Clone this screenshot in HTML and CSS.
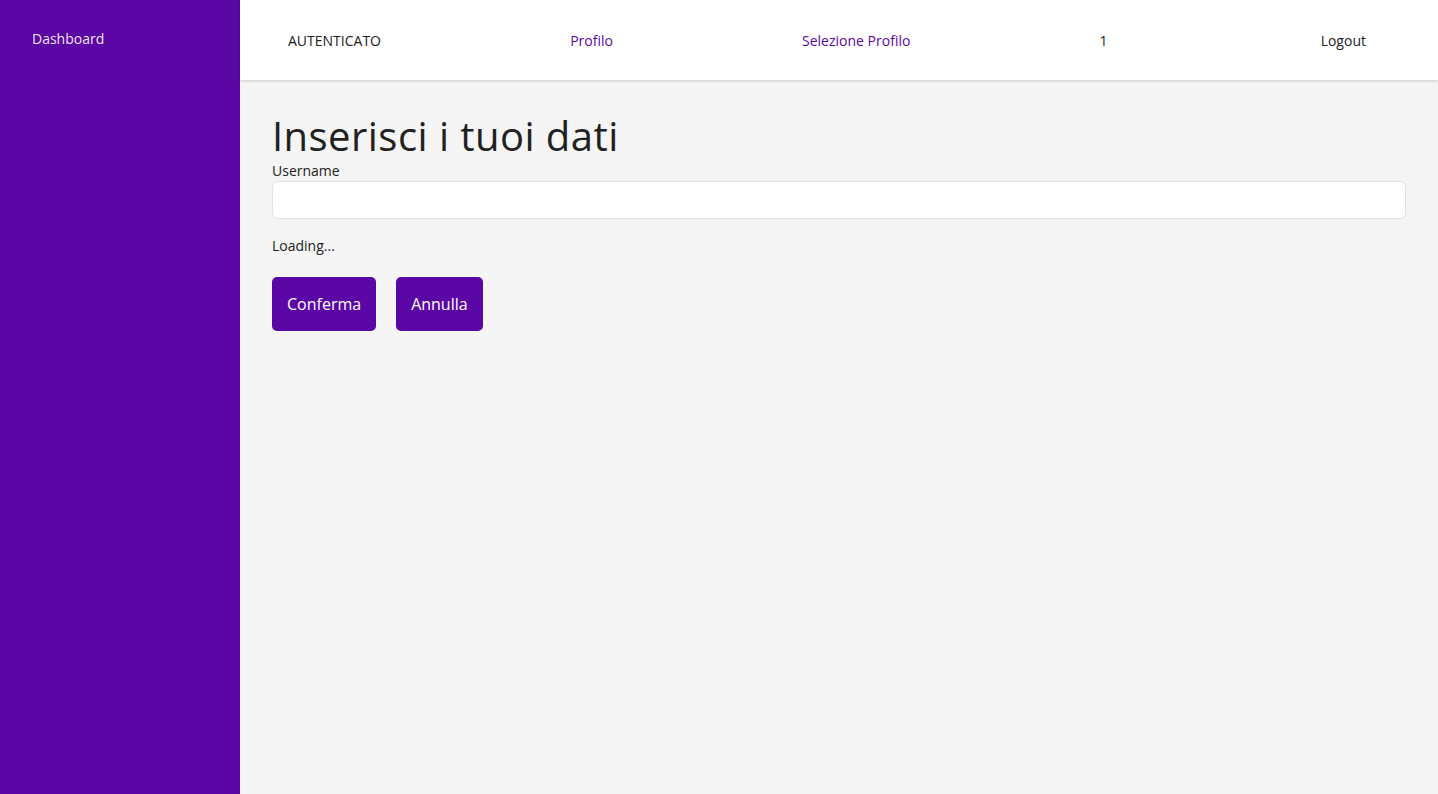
FILE: index.html
```html
<!DOCTYPE html>
<html lang="it">
<head>
<meta charset="utf-8">
<title>Inserisci i tuoi dati</title>
<link rel="stylesheet" href="styles.css">
</head>
<body>
<div class="layout">
  <aside class="sidebar">
    <a class="side-link" href="#">Dashboard</a>
  </aside>
  <div class="main">
    <header class="topbar">
      <span class="nav-item">AUTENTICATO</span>
      <a class="nav-item nav-link" href="#">Profilo</a>
      <a class="nav-item nav-link" href="#">Selezione Profilo</a>
      <span class="nav-item">1</span>
      <button class="nav-item logout">Logout</button>
    </header>
    <section class="content">
      <h1 class="title">Inserisci i tuoi dati</h1>
      <label class="label" for="username">Username</label>
      <input class="input" id="username" type="text">
      <p class="loading">Loading...</p>
      <div class="actions">
        <button class="btn">Conferma</button>
        <button class="btn">Annulla</button>
      </div>
    </section>
  </div>
</div>
</body>
</html>
```
FILE: styles.css
```css
* { box-sizing: border-box; }
html, body { margin: 0; padding: 0; height: 100%; }
body {
  font-family: "Open Sans", "Noto Sans", sans-serif;
  font-size: 14px;
  line-height: 21px;
  color: #212121;
  background: #f5f5f5;
}
.layout { display: flex; min-height: 100vh; }
.sidebar {
  width: 240px;
  flex: 0 0 240px;
  background: #5b07a5;
  padding: 28px 32px;
}
.side-link {
  color: rgba(255, 255, 255, 0.92);
  text-decoration: none;
  font-size: 14px;
  line-height: 21px;
}
.main { flex: 1; display: flex; flex-direction: column; }
.topbar {
  height: 80px;
  background: #fff;
  box-shadow: 0 1px 3px rgba(0, 0, 0, 0.18);
  display: flex;
  align-items: center;
  justify-content: space-between;
  padding: 1px 48px 0;
}
.nav-item { font-size: 14px; line-height: 21px; color: #212121; text-decoration: none; }
.nav-link { color: #5b07a5; }
.logout {
  font-family: inherit;
  background: none;
  border: 0;
  padding: 0 24px;
  cursor: pointer;
}
.content { padding: 32px; display: flex; flex-direction: column; align-items: flex-start; }
.title {
  margin: 0;
  font-size: 40px;
  line-height: 48px;
  font-weight: 400;
  letter-spacing: 0.45px;
  color: #212121;
}
.label { display: block; }
.input {
  width: 100%;
  height: 38px;
  background: #fff;
  border: 1px solid #e0e0e6;
  border-radius: 6px;
  font-family: inherit;
  font-size: 14px;
  padding: 0 12px;
}
.loading { margin: 16px 0 21px; }
.actions { display: flex; gap: 20px; }
.btn {
  font-family: inherit;
  font-size: 16px;
  line-height: 24px;
  padding: 15px 15px;
  background: #5b07a5;
  color: #fff;
  border: 0;
  border-radius: 5px;
  cursor: pointer;
}
```
